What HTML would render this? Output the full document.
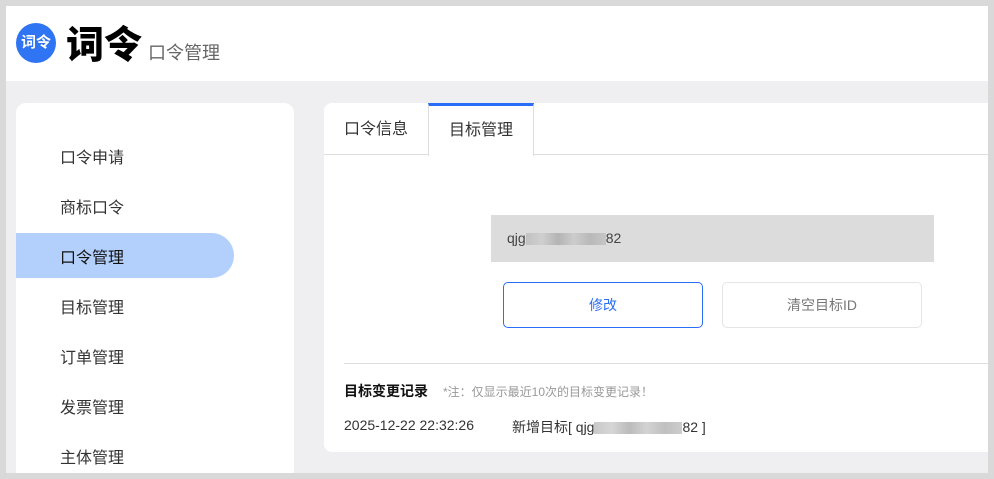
<!DOCTYPE html>
<html><head><meta charset="utf-8"><style>
*{margin:0;padding:0;box-sizing:border-box}
body{width:994px;height:479px;background:#d9d9d9;position:relative;overflow:hidden;font-family:"Liberation Sans","Noto Sans CJK SC",sans-serif;color:#333}
.page{position:absolute;left:6px;top:6px;width:982px;height:467px;background:#efeff1;overflow:hidden}
.hdr{position:absolute;left:0;top:0;width:982px;height:75px;background:#fff}
.logo{position:absolute;left:10px;top:17px;width:40px;height:40px;border-radius:50%;background:#2e74f3;color:#fff;font-size:15px;font-weight:bold;text-align:center;line-height:40px}
.brand{position:absolute;left:60px;top:13px;font-size:38px;font-weight:900;color:#000;line-height:46px;font-family:"Noto Sans CJK SC",sans-serif}
.sub{position:absolute;left:142px;top:35px;font-size:18px;color:#666;line-height:24px}
.side{position:absolute;left:10px;top:97px;width:278px;height:370px;background:#fff;border-radius:10px 10px 0 0}
.item{position:absolute;left:0;width:218px;height:45px;line-height:45px;padding-left:44px;font-size:16px;color:#333}
.item.act{background:#b3d0fd;border-radius:0 23px 23px 0;color:#111;line-height:51px}
.main{position:absolute;left:318px;top:97px;width:680px;height:349px;background:#fff;border-radius:8px}
.tabs{position:absolute;left:0;top:0;width:680px;height:52px;border-bottom:1px solid #ddd}
.tab{position:absolute;top:0;height:52px;line-height:54px;font-size:16px;color:#333;text-align:center}
.t2{border-top:3px solid #2a6ef5;border-left:1px solid #ddd;border-right:1px solid #ddd;background:#fff;height:53px;line-height:50px}
.inp{position:absolute;left:167px;top:112px;width:443px;height:47px;background:#dcdcdc;font-size:14px;line-height:47px;padding-left:16px;color:#444}
.blur{display:inline-block;vertical-align:middle;height:12px;background:linear-gradient(90deg,#bbb,#ccc,#aaa,#c8c8c8,#b0b0b0,#c0c0c0);opacity:.8}
.btn{position:absolute;top:179px;width:200px;height:46px;border-radius:5px;text-align:center;line-height:44px;font-size:14px}
.b1{left:179px;border:1px solid #2a6ef5;color:#2a6ef5}
.b2{left:398px;border:1px solid #e5e5e5;color:#777}
.div{position:absolute;left:20px;top:260px;width:660px;height:1px;background:#ddd}
.rt{position:absolute;left:20px;top:278px;font-size:14px;font-weight:bold;color:#111}
.note{position:absolute;left:119px;top:280px;font-size:12px;color:#999}
.row{position:absolute;top:314px;font-size:14px;color:#333}
</style></head><body>
<div class="page">
<div class="hdr">
<div class="logo">词令</div>
<div class="brand">词令</div>
<div class="sub">口令管理</div>
</div>
<div class="side">
<div class="item" style="top:33px">口令申请</div>
<div class="item" style="top:83px">商标口令</div>
<div class="item act" style="top:130px">口令管理</div>
<div class="item" style="top:183px">目标管理</div>
<div class="item" style="top:233px">订单管理</div>
<div class="item" style="top:283px">发票管理</div>
<div class="item" style="top:333px">主体管理</div>
</div>
<div class="main">
<div class="tabs">
<div class="tab" style="left:0;width:104px">口令信息</div>
<div class="tab t2" style="left:104px;width:106px">目标管理</div>
</div>
<div class="inp">qjg<span class="blur" style="width:80px"></span>82</div>
<div class="btn b1">修改</div>
<div class="btn b2">清空目标ID</div>
<div class="div"></div>
<div class="rt">目标变更记录</div>
<div class="note">*注：仅显示最近10次的目标变更记录！</div>
<div class="row" style="left:20px">2025-12-22 22:32:26</div>
<div class="row" style="left:188px">新增目标[ qjg<span class="blur" style="width:88px"></span>82 ]</div>
</div>
</div>
</body></html>
